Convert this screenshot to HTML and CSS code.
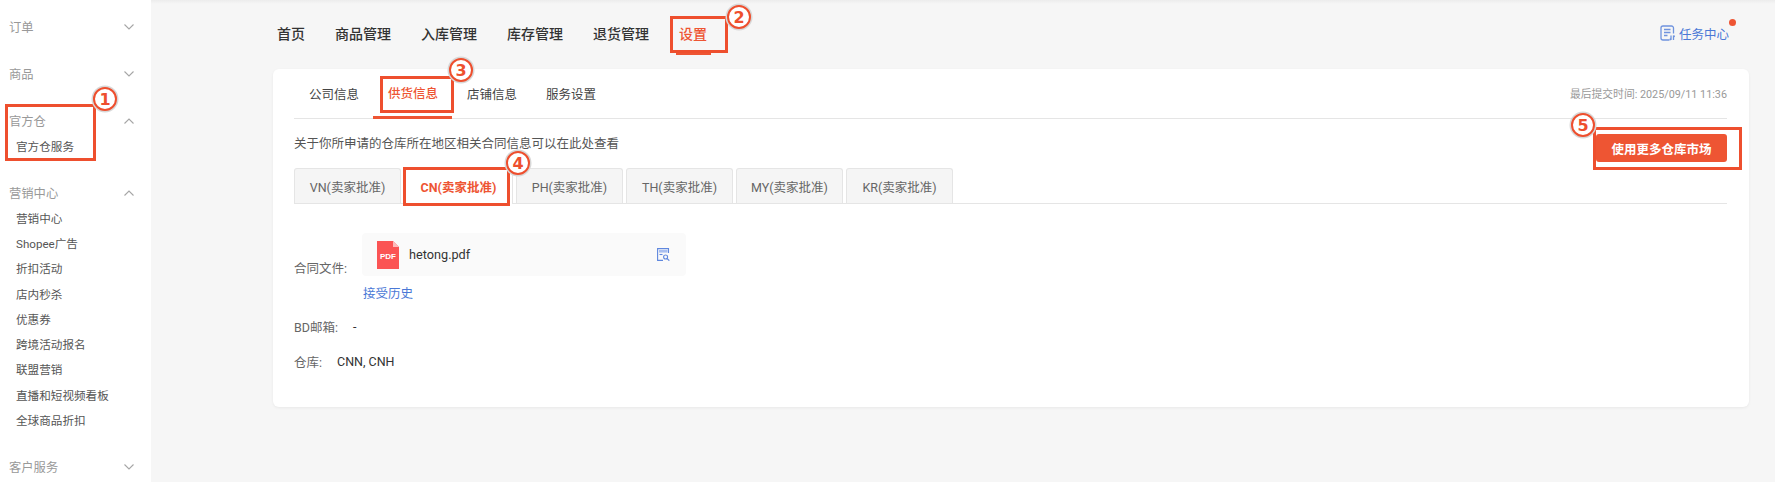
FILE: index.html
```html
<!DOCTYPE html>
<html lang="zh-CN">
<head>
  <meta charset="UTF-8">
  <meta name="viewport" content="width=device-width, initial-scale=1.0">
  <title>供货信息</title>
  <link rel="stylesheet" href="styles.css">
</head>
<body>
  <div class="page">
    <aside class="sidebar">
      <div class="group">
        <div class="group-title">订单<svg class="chevron" viewBox="0 0 10 6"><polyline points="0.5,0.5 5,5 9.5,0.5"/></svg></div>
      </div>
      <div class="group">
        <div class="group-title">商品<svg class="chevron" viewBox="0 0 10 6"><polyline points="0.5,0.5 5,5 9.5,0.5"/></svg></div>
      </div>
      <div class="group">
        <div class="group-title">官方仓<svg class="chevron" viewBox="0 0 10 6"><polyline points="0.5,5.5 5,1 9.5,5.5"/></svg></div>
        <a class="side-link">官方仓服务</a>
      </div>
      <div class="group">
        <div class="group-title">营销中心<svg class="chevron" viewBox="0 0 10 6"><polyline points="0.5,5.5 5,1 9.5,5.5"/></svg></div>
        <a class="side-link">营销中心</a>
        <a class="side-link">Shopee广告</a>
        <a class="side-link">折扣活动</a>
        <a class="side-link">店内秒杀</a>
        <a class="side-link">优惠券</a>
        <a class="side-link">跨境活动报名</a>
        <a class="side-link">联盟营销</a>
        <a class="side-link">直播和短视频看板</a>
        <a class="side-link">全球商品折扣</a>
      </div>
      <div class="group">
        <div class="group-title">客户服务<svg class="chevron" viewBox="0 0 10 6"><polyline points="0.5,0.5 5,5 9.5,0.5"/></svg></div>
      </div>
    </aside>

    <main class="main">
      <nav class="topnav">
        <a class="topnav-item">首页</a>
        <a class="topnav-item">商品管理</a>
        <a class="topnav-item">入库管理</a>
        <a class="topnav-item">库存管理</a>
        <a class="topnav-item">退货管理</a>
        <a class="topnav-item active">设置</a>
        <a class="task-center">
          <svg class="task-icon" viewBox="0 0 15 16">
            <path d="M13.5 8.5V3a2 2 0 0 0-2-2H3a2 2 0 0 0-2 2v10a2 2 0 0 0 2 2h6.5"/>
            <path d="M4 4.5h6.5M4 7.5h6.5M4 10.5h3.5"/>
            <path d="M11 10.5V15M11 15l-1.3-1.3M13.5 10.5V15M13.5 10.5l1.3 1.3"/>
          </svg>
          任务中心
          <span class="task-dot"></span>
        </a>
      </nav>

      <section class="card">
        <div class="card-tabs">
          <a class="card-tab">公司信息</a>
          <a class="card-tab active">供货信息</a>
          <a class="card-tab">店铺信息</a>
          <a class="card-tab">服务设置</a>
          <span class="submit-time">最后提交时间: 2025/09/11 11:36</span>
        </div>

        <div class="intro">
          <p class="intro-text">关于你所申请的仓库所在地区相关合同信息可以在此处查看</p>
          <button class="btn-market">使用更多仓库市场</button>
        </div>

        <div class="region-tabs">
          <a class="region-tab">VN(卖家批准)</a>
          <a class="region-tab active">CN(卖家批准)</a>
          <a class="region-tab">PH(卖家批准)</a>
          <a class="region-tab">TH(卖家批准)</a>
          <a class="region-tab">MY(卖家批准)</a>
          <a class="region-tab">KR(卖家批准)</a>
        </div>

        <div class="form">
          <div class="form-row">
            <span class="form-label">合同文件:</span>
            <div class="form-value">
              <div class="file-box">
                <svg class="pdf-icon" viewBox="0 0 22 28">
                  <path class="pdf-sheet" d="M0 0h16l6 6v22H0z"/>
                  <path class="pdf-fold" d="M16 0l6 6h-6z"/>
                  <text class="pdf-text" x="11" y="18" text-anchor="middle">PDF</text>
                </svg>
                <span class="file-name">hetong.pdf</span>
                <svg class="preview-icon" viewBox="0 0 13 13">
                  <path class="preview-line" d="M11.5 5V.6H.6v11.8H6"/>
                  <rect class="preview-head" x="2" y="2" width="8.6" height="2.6"/>
                  <path class="preview-line" d="M2.5 6.5h3"/>
                  <circle class="preview-line" cx="8.6" cy="9" r="2"/>
                  <path class="preview-line" d="M10.1 10.5l2.2 2.2"/>
                </svg>
              </div>
              <a class="history-link">接受历史</a>
            </div>
          </div>
          <div class="form-row">
            <span class="form-label">BD邮箱:</span>
            <span class="form-text">-</span>
          </div>
          <div class="form-row">
            <span class="form-label">仓库:</span>
            <span class="form-text">CNN, CNH</span>
          </div>
        </div>
      </section>
    </main>
  </div>

  <!-- annotations drawn over the screenshot -->
  <div class="mark-box box-1"></div>
  <div class="mark-box box-2"></div>
  <div class="mark-box box-3"></div>
  <div class="mark-box box-4"></div>
  <div class="mark-box box-5"></div>
  <span class="mark-num num-1">1</span>
  <span class="mark-num num-2">2</span>
  <span class="mark-num num-3">3</span>
  <span class="mark-num num-4">4</span>
  <span class="mark-num num-5">5</span>
</body>
</html>
```

FILE: styles.css
```css
* {
  box-sizing: border-box;
}

html, body {
  margin: 0;
  height: 482px;
  overflow: hidden;
}

body {
  position: relative;
  font-family: Roboto, "Noto Sans CJK SC", sans-serif;
  font-size: 12.5px;
  color: #333;
  background-color: #f6f6f6;
}

.page {
  display: flex;
  height: 482px;
}

/* sidebar */
.sidebar {
  flex: none;
  width: 151px;
  padding: 15px 17px 0 9px;
  background-color: #fff;
  box-shadow: 1px 0 3px rgba(0, 0, 0, 0.08);
}

.group {
  margin-bottom: 22.9px;
}

.group-title {
  display: flex;
  align-items: center;
  justify-content: space-between;
  height: 24px;
  font-size: 12.3px;
  color: #999;
}

.chevron {
  width: 10px;
  height: 6px;
}

.chevron polyline {
  fill: none;
  stroke: #a6a6a6;
  stroke-width: 1.1;
}

.side-link {
  display: block;
  height: 25.25px;
  padding-left: 7px;
  font-size: 11.6px;
  line-height: 28px;
  color: #555;
}

/* main */
.main {
  flex: 1;
  min-width: 0;
  background: linear-gradient(#ececec, #f6f6f6 4px);
}

.topnav {
  display: flex;
  align-items: center;
  gap: 30px;
  height: 69px;
  padding: 0 46px 3px 126px;
}

.topnav-item {
  position: relative;
  font-size: 14px;
  font-weight: 500;
  color: #333;
}

.topnav-item.active {
  color: #ee5533;
}

.topnav-item.active::after {
  content: "";
  position: absolute;
  top: 30px;
  left: -3px;
  right: -4px;
  height: 2px;
  background-color: #ee5533;
}

.task-center {
  position: relative;
  display: flex;
  align-items: center;
  gap: 4px;
  margin-left: auto;
  font-size: 12.5px;
  color: #4a78d6;
}

.task-icon {
  width: 15px;
  height: 16px;
  fill: none;
  stroke: #6f93de;
  stroke-width: 1.3;
}

.task-dot {
  position: absolute;
  top: -5px;
  right: -7px;
  width: 7px;
  height: 7px;
  border-radius: 50%;
  background-color: #ee5533;
}

.card {
  width: 1476px;
  height: 338px;
  margin-left: 122px;
  padding: 0 22px 0 21px;
  border-radius: 6px;
  background-color: #fff;
  box-shadow: 0 1px 3px rgba(0, 0, 0, 0.06);
}

.card-tabs {
  display: flex;
  align-items: center;
  height: 50px;
  border-bottom: 1px solid #e5e5e5;
}

.card-tab {
  display: flex;
  align-items: center;
  justify-content: center;
  width: 79px;
  height: 50px;
  margin-bottom: -1px;
  padding: 0 0 1px 1px;
  color: #444;
}

.card-tab.active {
  font-weight: 500;
  color: #ee5533;
  border-bottom: 3px solid #ee5533;
}

.submit-time {
  margin-left: auto;
  padding-bottom: 2px;
  font-size: 10.8px;
  color: #999;
}

.intro {
  display: flex;
  align-items: flex-start;
  justify-content: space-between;
  padding-top: 15px;
}

.intro-text {
  margin: 0;
  line-height: 20px;
  color: #555;
}

.btn-market {
  width: 131px;
  height: 28px;
  padding: 0;
  border: none;
  border-radius: 3px;
  font-family: inherit;
  font-size: 12.5px;
  font-weight: 700;
  color: #fff;
  background-color: #ee5533;
}

.region-tabs {
  display: flex;
  gap: 3px;
  height: 36px;
  margin-top: 6px;
  border-bottom: 1px solid #e5e5e5;
}

.region-tab {
  display: flex;
  align-items: center;
  justify-content: center;
  width: 107px;
  height: 35px;
  border: 1px solid #e5e5e5;
  border-bottom: none;
  border-radius: 3px 3px 0 0;
  color: #666;
  background-color: #f5f5f5;
}

.region-tab.active {
  width: 109px;
  height: 36px;
  font-weight: 700;
  color: #ee5533;
  background-color: #fff;
}

.form {
  display: flex;
  flex-direction: column;
  gap: 15px;
  margin-top: 29px;
}

.form-row {
  display: flex;
  align-items: center;
  gap: 15px;
  min-height: 20px;
}

.form-label {
  color: #666;
}

.file-box {
  display: flex;
  align-items: center;
  width: 324px;
  height: 43px;
  padding: 0 16px 0 15px;
  border-radius: 4px;
  background-color: #fafafa;
}

.pdf-icon {
  width: 22px;
  height: 28px;
  margin-right: 10px;
}

.pdf-sheet {
  fill: #fb5454;
}

.pdf-fold {
  fill: #fdbcbc;
}

.pdf-text {
  font-family: "Liberation Sans", sans-serif;
  font-size: 8px;
  font-weight: 700;
  fill: #fff;
}

.file-name {
  padding-bottom: 1px;
  font-size: 12.7px;
  color: #333;
}

.preview-icon {
  width: 13px;
  height: 13px;
  margin-left: auto;
}

.preview-line {
  fill: none;
  stroke: #5f87de;
  stroke-width: 1.1;
}

.preview-head {
  fill: #a9bff0;
}

.history-link {
  display: block;
  margin-top: 10px;
  padding-left: 1px;
  line-height: 15px;
  color: #4a78d6;
}

/* annotations */
.mark-box {
  position: absolute;
  border: 3px solid #ee4f2e;
}

.box-1 { left: 5px; top: 104px; width: 91px; height: 57px; }
.box-2 { left: 670px; top: 16px; width: 58px; height: 37px; }
.box-3 { left: 380px; top: 76px; width: 74px; height: 37px; }
.box-4 { left: 403px; top: 167px; width: 107px; height: 39px; }
.box-5 { left: 1593px; top: 127px; width: 149px; height: 43px; }

.mark-num {
  position: absolute;
  display: flex;
  align-items: center;
  justify-content: center;
  width: 24px;
  height: 24px;
  border: 2.5px solid #ee4f2e;
  border-radius: 50%;
  font-family: "DejaVu Sans", sans-serif;
  font-size: 16px;
  font-weight: 700;
  color: #ee4f2e;
  background-color: #fff;
  box-shadow: 0 0 0 1.5px #d8d8d8;
}

.num-1 { left: 93px; top: 87px; }
.num-2 { left: 727px; top: 5px; }
.num-3 { left: 449px; top: 58px; }
.num-4 { left: 506px; top: 151px; }
.num-5 { left: 1571px; top: 113px; }
```
